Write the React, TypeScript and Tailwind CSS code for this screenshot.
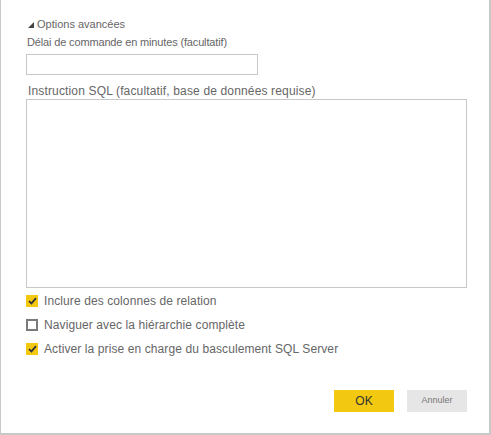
export default function App() {
  const options = [
    { label: "Inclure des colonnes de relation", checked: true },
    { label: "Naviguer avec la hiérarchie complète", checked: false },
    { label: "Activer la prise en charge du basculement SQL Server", checked: true },
  ];

  return (
    <div
      className="w-[491px] h-[435px] bg-white border-l border-r-2 border-b-2 border-[#c8c8c8] flex flex-col pl-[25px] pr-[22px] pt-[17px] text-[#666]"
      style={{ fontFamily: '"Liberation Sans", Arial, sans-serif' }}
    >
      <div className="flex items-center h-[14px] pl-[2px] text-[11px]">
        <svg width="6" height="6" viewBox="0 0 6 6" className="mr-[3px] mt-[1px]">
          <polygon points="6,0 6,6 0,6" fill="#444" />
        </svg>
        <span>Options avancées</span>
      </div>

      <div className="mt-[4px] pl-[1px] text-[11px] tracking-[-0.15px] h-[14px] leading-[14px]">
        Délai de commande en minutes (facultatif)
      </div>
      <input className="mt-[5px] w-[232px] h-[21px] border border-[#c8c8c8] outline-none" />

      <div className="mt-[9px] pl-[2px] text-[12px] tracking-[0.15px] h-[15px] leading-[15px]">
        Instruction SQL (facultatif, base de données requise)
      </div>
      <textarea className="w-[441px] h-[189px] border border-[#c8c8c8] outline-none resize-none" />

      <div className="mt-[7px] flex flex-col gap-[12px]">
        {options.map((o) => (
          <label key={o.label} className="flex items-center h-[12px] text-[12px] tracking-[0.1px]">
            {o.checked ? (
              <span className="w-[12px] h-[12px] bg-[#f2c811] flex items-center justify-center">
                <svg width="9" height="8" viewBox="0 0 9 8">
                  <path d="M1 4.2 L3.4 6.4 L8 1.2" stroke="#333" strokeWidth="1.8" fill="none" />
                </svg>
              </span>
            ) : (
              <span className="w-[12px] h-[12px] border-2 border-[#7a7a7a] bg-white" />
            )}
            <span className="ml-[6px]">{o.label}</span>
          </label>
        ))}
      </div>

      <div className="mt-auto mb-[21px] flex justify-end gap-[13px]">
        <button className="w-[60px] h-[22px] bg-[#f2c811] text-[#333] text-[12px]">OK</button>
        <button className="w-[60px] h-[22px] bg-[#e6e6e6] text-[#777] text-[9px]">Annuler</button>
      </div>
    </div>
  );
}
